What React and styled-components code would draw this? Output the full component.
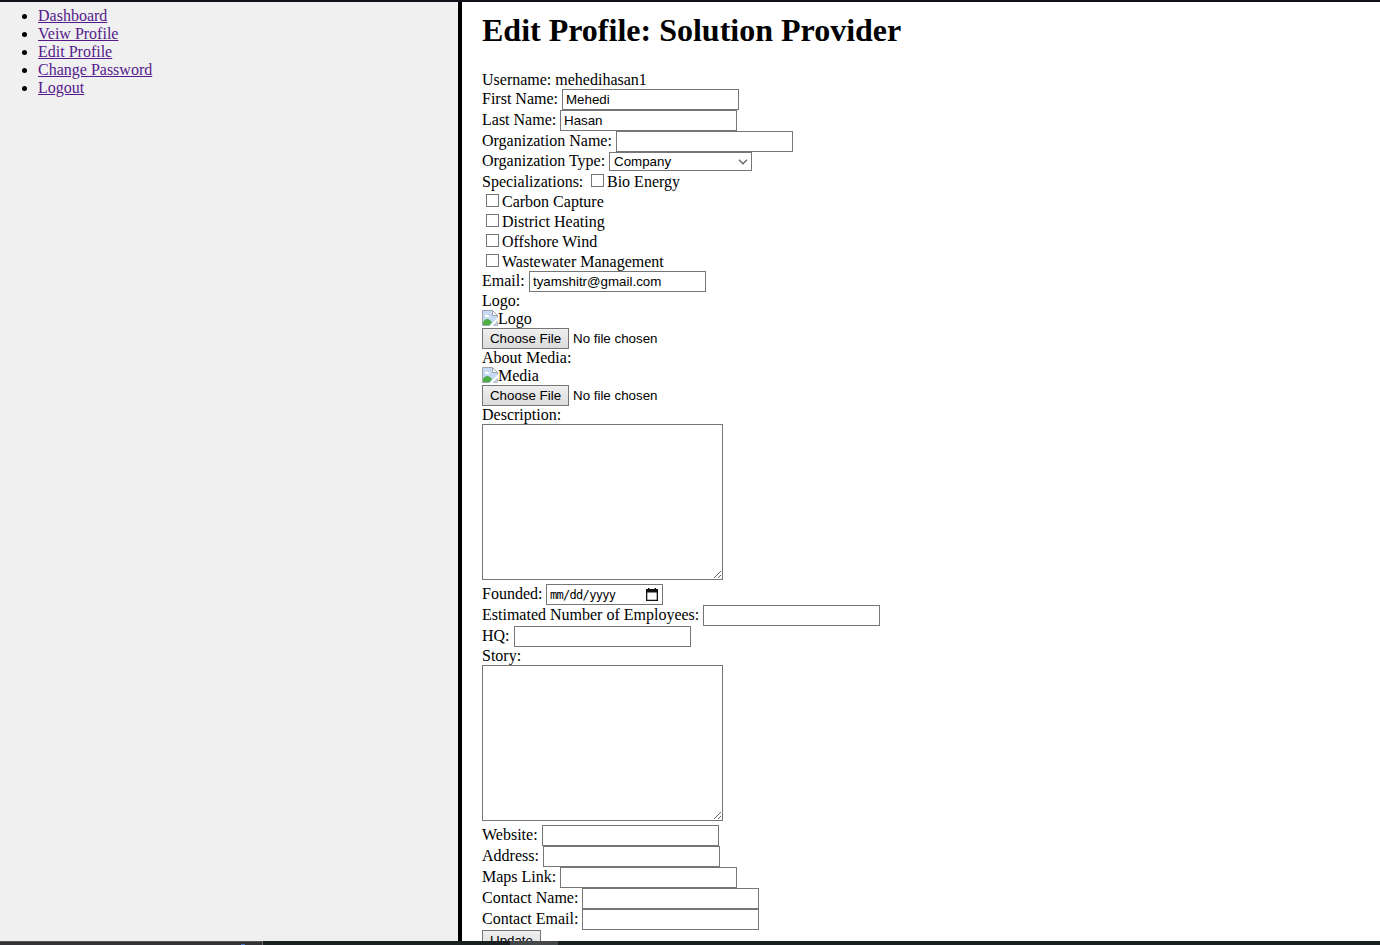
import React from "react";
import styled, { createGlobalStyle } from "styled-components";

const GlobalStyle = createGlobalStyle`
  * { box-sizing: border-box; }
  html, body { margin: 0; padding: 0; overflow: hidden; }
  body {
    font-family: "Liberation Serif", "Times New Roman", serif;
    font-size: 16px;
    line-height: 18px;
    color: #000;
    background: #fff;
  }
`;

const Screen = styled.div`
  display: flex;
  flex-direction: column;
  width: 1380px;
  height: 945px;
  overflow: hidden;
`;

const TopEdge = styled.div`
  flex: 0 0 2px;
  background: #12101a;
`;

const Columns = styled.div`
  flex: 1 1 0;
  min-height: 0;
  display: flex;
  overflow: hidden;
`;

const Sidebar = styled.nav`
  flex: 0 0 462px;
  border-right: 4px solid #000;
  background: #f0f0f0;
  padding: 5px 0 0 38px;
`;

const Menu = styled.ul`
  margin: 0;
  padding: 0;
`;

const MenuLink = styled.a`
  color: #551a8b;
  text-decoration: underline;
  letter-spacing: ${(p) => p.$spacing || 0}px;
`;

const Content = styled.main`
  flex: 1;
  padding-left: 20px;
  overflow: hidden;
`;

const Title = styled.h1`
  margin: 0;
  height: 69px;
  padding-top: 10px;
  font-size: 32px;
  line-height: 37px;
  white-space: nowrap;
`;

const Row = styled.div`
  display: flex;
  align-items: flex-start;
  height: ${(p) => p.$height || 21}px;
  white-space: nowrap;
`;

const Label = styled.label`
  flex: none;
  width: ${(p) => (p.$width ? `${p.$width}px` : "auto")};
  padding-top: ${(p) => p.$top ?? 1}px;
  letter-spacing: ${(p) => p.$spacing || 0}px;
`;

const TextInput = styled.input`
  width: 177px;
  height: 21px;
  margin: 0;
  padding: 1px 3px;
  border: 1px solid #767676;
  border-radius: 0;
  background: #fff;
  color: #000;
  outline: none;
  font: 13.333px "Liberation Sans", Arial, sans-serif;
`;

const SelectBox = styled.div`
  display: flex;
  align-items: center;
  justify-content: space-between;
  width: 143px;
  height: 19px;
  padding: 0 3px 0 4px;
  border: 1px solid #767676;
  font: 13.333px "Liberation Sans", Arial, sans-serif;
`;

const Checkbox = styled.input.attrs({ type: "checkbox" })`
  appearance: none;
  flex: none;
  width: 13px;
  height: 13px;
  margin: 2px 3px 0 4px;
  border: 1px solid #767676;
  background: #fff;
`;

const Button = styled.button`
  flex: none;
  width: ${(p) => p.$width}px;
  height: 21px;
  padding: 0;
  border: 1px solid #767676;
  border-radius: 0;
  background: linear-gradient(#efefef, #dcdcdc);
  color: #000;
  font: 13.333px "Liberation Sans", Arial, sans-serif;
`;

const FileStatus = styled.span`
  margin-left: 4px;
  font: 13.333px/21px "Liberation Sans", Arial, sans-serif;
`;

const TextArea = styled.textarea`
  display: block;
  width: 241px;
  height: 156px;
  margin: 0 0 4px;
  padding: 2px;
  border: 1px solid #767676;
  border-radius: 0;
  outline: none;
  resize: both;
`;

const DateBox = styled.div`
  display: flex;
  align-items: center;
  justify-content: space-between;
  width: 117px;
  height: 21px;
  padding: 0 4px 0 3px;
  border: 1px solid #767676;
  font: 12px "DejaVu Sans Mono", monospace;
`;

const DateText = styled.span`
  letter-spacing: -0.7px;
  padding-top: 1px;
`;

const BottomEdge = styled.div`
  flex: 0 0 4px;
  display: flex;
  background: #1a2021;
`;

const TaskSegment = styled.div`
  width: 263px;
  border-top: 1px solid #555557;
  border-right: 1px solid #707070;
  background: #333335;
  padding-left: 241px;
`;

const TaskMark = styled.div`
  width: 4px;
  height: 1px;
  margin-top: 2px;
  background: #4672c4;
`;

const TaskHighlight = styled.div`
  width: 48px;
  margin-left: 247px;
  background: #454848;
`;

const BrokenImage = () => (
  <svg width="16" height="16" viewBox="0 0 16 16" style={{ flex: "none" }}>
    <path d="M.5 .5h10l5 5v3l-7 7h-8z" fill="#c6d9f5" />
    <path d="M1 15V12c2-4 6-4 9 0l-2 3z" fill="#4fae45" />
    <path d="M3 6c0-2 3-2 3-.5 2-.3 2 1.500 1 1.500H3z" fill="#fff" />
    <path d="M.5 15.500V.5h10l5 5v2M.5 15.500h7" fill="none" stroke="#a0a4a8" />
    <path d="M10.500 .5v5h5z" fill="#fff" stroke="#a0a4a8" />
    <path d="M7.500 16L16 7.500V10l-6 6z" fill="#fff" />
    <path d="M11.500 15.500l4-4v4z" fill="#c6d9f5" stroke="#a0a4a8" strokeWidth=".7" />
  </svg>
);

const Chevron = () => (
  <svg width="10" height="6" viewBox="0 0 10 6">
    <path d="M1 .8l4 4 4-4" fill="none" stroke="#666" strokeWidth="1.400" />
  </svg>
);

const Calendar = () => (
  <svg width="12" height="13" viewBox="0 0 12 13">
    <path d="M0 1h2V0h1.500v1h5V0H10v1h2v12H0zM1.300 4.500v7.200h9.400V4.500z" fill="#111" fillRule="evenodd" />
  </svg>
);

const links = ["Dashboard", "Veiw Profile", "Edit Profile", "Change Password", "Logout"];

const Field = ({ label, width, value = "" }) => (
  <Row>
    <Label $width={width}>{label}</Label>
    <TextInput defaultValue={value} spellCheck={false} />
  </Row>
);

const Upload = ({ label, alt }) => (
  <>
    <Row $height={18}><Label $top={0}>{label}</Label></Row>
    <Row $height={18}><BrokenImage /><Label $top={0}>{alt}</Label></Row>
    <Row>
      <Button $width={87}>Choose File</Button>
      <FileStatus>No file chosen</FileStatus>
    </Row>
  </>
);

const Option = ({ children }) => (
  <>
    <Checkbox />
    <Label>{children}</Label>
  </>
);

export default function App() {
  return (
    <Screen>
      <GlobalStyle />
      <TopEdge />
      <Columns>
        <Sidebar>
          <Menu>
            {links.map((text) => (
              <li key={text}><MenuLink href="#">{text}</MenuLink></li>
            ))}
          </Menu>
        </Sidebar>
        <Content>
          <Title>Edit Profile: Solution Provider</Title>
          <Row $height={18}><Label $top={0}>Username: mehedihasan1</Label></Row>
          <Field label="First Name:" width={80} value="Mehedi" />
          <Field label="Last Name:" width={78} value="Hasan" />
          <Field label="Organization Name:" width={134} />
          <Row $height={20}>
            <Label $width={127} $top={0}>Organization Type:</Label>
            <SelectBox><span>Company</span><Chevron /></SelectBox>
          </Row>
          <Row $height={20}>
            <Label $width={105}>Specializations:</Label>
            <Option>Bio Energy</Option>
          </Row>
          {["Carbon Capture", "District Heating", "Offshore Wind"].map((name) => (
            <Row key={name} $height={20}><Option>{name}</Option></Row>
          ))}
          <Row $height={19}><Option>Wastewater Management</Option></Row>
          <Field label="Email:" width={47} value="tyamshitr@gmail.com" />
          <Upload label="Logo:" alt="Logo" />
          <Upload label="About Media:" alt="Media" />
          <Row $height={18}><Label $top={0}>Description:</Label></Row>
          <TextArea />
          <Row>
            <Label $width={64}>Founded:</Label>
            <DateBox><DateText>mm/dd/yyyy</DateText><Calendar /></DateBox>
          </Row>
          <Field label="Estimated Number of Employees:" width={221} />
          <Field label="HQ:" width={32} />
          <Row $height={18}><Label $top={0}>Story:</Label></Row>
          <TextArea />
          <Field label="Website:" width={60} />
          <Field label="Address:" width={61} />
          <Field label="Maps Link:" width={78} />
          <Field label="Contact Name:" width={100} />
          <Field label="Contact Email:" width={100} />
          <Row><Button $width={59}>Update</Button></Row>
        </Content>
      </Columns>
      <BottomEdge>
        <TaskSegment><TaskMark /></TaskSegment>
        <TaskHighlight />
      </BottomEdge>
    </Screen>
  );
}
